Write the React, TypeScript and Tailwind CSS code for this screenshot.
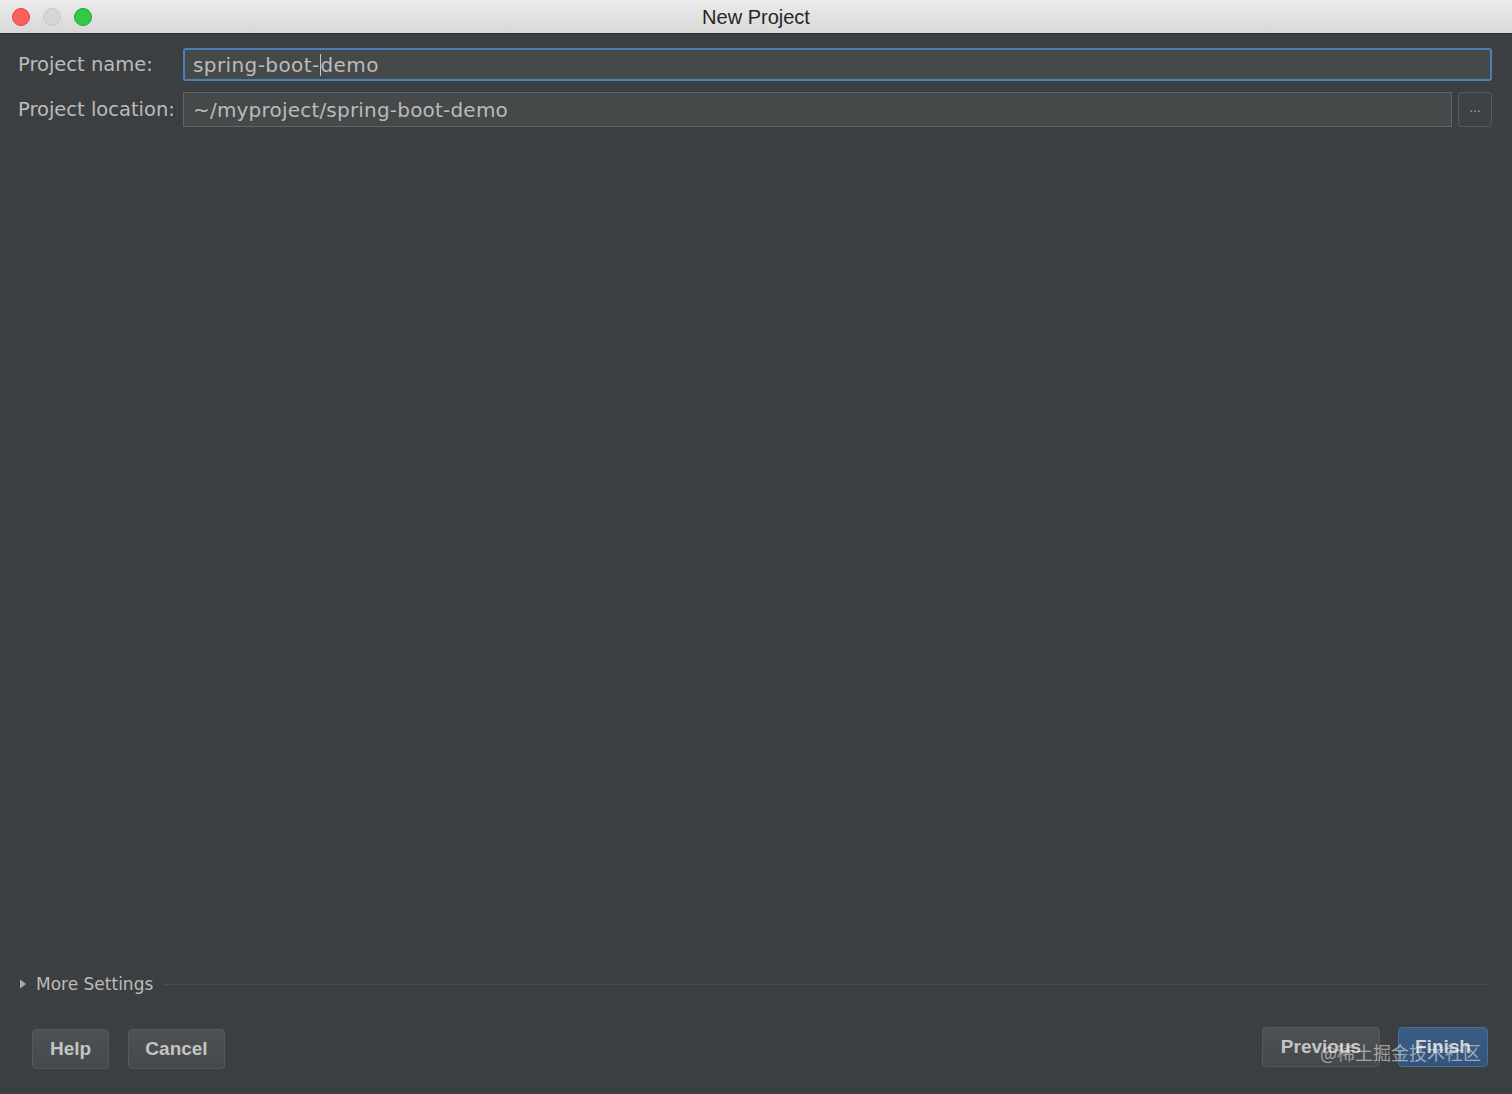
export default function App() {
  const ui = { fontFamily: '"DejaVu Sans", "Noto Sans", sans-serif' };
  const btn = { fontFamily: '"Liberation Sans", Arial, sans-serif' };
  return (
    <div className="flex h-[1094px] w-[1512px] flex-col overflow-hidden bg-[#3c3f41]" style={ui}>
      {/* title bar */}
      <div className="relative flex h-[34px] shrink-0 items-center justify-center border-b border-[#2b2b2b] bg-gradient-to-b from-[#ececec] to-[#d8d8d8]">
        <div className="absolute left-[12px] top-[8px] flex gap-[13px]">
          <span className="h-[18px] w-[18px] rounded-full border border-[#e0443e] bg-[#fc605c]" />
          <span className="h-[18px] w-[18px] rounded-full border border-[#c6c6c6] bg-[#d6d6d6]" />
          <span className="h-[18px] w-[18px] rounded-full border border-[#1aab29] bg-[#34c84a]" />
        </div>
        <span className="text-[20px] text-[#262626]" style={btn}>New Project</span>
      </div>

      {/* form */}
      <div className="flex flex-col gap-[11px] pl-[18px] pr-[20px] pt-[14px]">
        <div className="flex items-center">
          <label className="mt-[1px] w-[165px] text-[19.5px] text-[#bbbbbb]">Project name:</label>
          <div className="flex h-[33px] flex-1 items-center rounded-[3px] border-2 border-[#4a7fb8] bg-[#45494a] pl-[8px] text-[20px] tracking-[0.4px] text-[#bbbbbb]">
            spring-boot-
            <span className="inline-block h-[22px] w-px bg-[#c8c8c8]" />
            demo
          </div>
        </div>
        <div className="flex items-center">
          <label className="mt-[1px] w-[165px] text-[19.5px] text-[#bbbbbb]">Project location:</label>
          <div className="flex h-[35px] flex-1 items-center border border-[#646464] bg-[#45494a] pl-[9px] text-[20px] tracking-[0.2px] text-[#bbbbbb]">
            ~/myproject/spring-boot-demo
          </div>
          <button className="ml-[6px] flex h-[35px] w-[34px] items-center justify-center rounded-[3px] border border-[#555a5c] bg-[#3f4244] pb-[4px] text-[12px] text-[#aaaaaa]">
            ...
          </button>
        </div>
      </div>

      <div className="flex-1" />

      {/* more settings */}
      <div className="flex items-center pl-[19px] pr-[25px]">
        <svg width="8" height="10" viewBox="0 0 8 10" className="mr-[9px]">
          <path d="M1 0.5 L7 5 L1 9.5 Z" fill="#a9a9a9" />
        </svg>
        <span className="text-[17px] text-[#bbbbbb]">More Settings</span>
        <div className="ml-[11px] h-px flex-1 bg-[#4b4e50]" />
      </div>

      {/* buttons */}
      <div className="relative flex items-center justify-between pb-[25px] pl-[32px] pr-[24px] pt-[32px]" style={btn}>
        <div className="flex gap-[19px]">
          <button className="h-[40px] w-[77px] rounded-[4px] border border-[#55595b] bg-gradient-to-b from-[#4d5153] to-[#46494b] text-[19px] font-bold text-[#c4c4c4]">
            Help
          </button>
          <button className="h-[40px] w-[97px] rounded-[4px] border border-[#55595b] bg-gradient-to-b from-[#4d5153] to-[#46494b] text-[19px] font-bold text-[#c4c4c4]">
            Cancel
          </button>
        </div>
        <div className="-mt-[4px] flex gap-[18px]">
          <button className="h-[40px] w-[118px] rounded-[4px] border border-[#55595b] bg-gradient-to-b from-[#4d5153] to-[#46494b] text-[19px] font-bold text-[#c4c4c4]">
            Previous
          </button>
          <button className="h-[40px] w-[90px] rounded-[4px] border border-[#4b6f96] bg-gradient-to-b from-[#3a5d86] to-[#33537a] text-[19px] font-bold text-[#d0d0d0]">
            Finish
          </button>
        </div>
        <span
          className="absolute bottom-[28px] right-[31px] text-[18px] text-[#ffffff]/50"
          style={{ fontFamily: '"Noto Sans CJK SC", sans-serif' }}
        >
          @稀土掘金技术社区
        </span>
      </div>
    </div>
  );
}
